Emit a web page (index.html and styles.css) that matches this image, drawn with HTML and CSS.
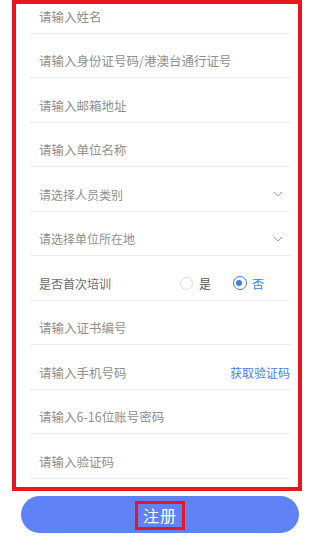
FILE: index.html
```html
<!DOCTYPE html>
<html lang="zh-CN">
<head>
    <meta charset="UTF-8">
    <meta name="viewport" content="width=device-width, initial-scale=1.0">
    <title>注册</title>
    <link rel="stylesheet" href="styles.css">
</head>
<body>
    <div class="form-box">
        <div class="row"><span class="hint">请输入姓名</span></div>
        <div class="row"><span class="hint">请输入身份证号码/港澳台通行证号</span></div>
        <div class="row"><span class="hint">请输入邮箱地址</span></div>
        <div class="row"><span class="hint">请输入单位名称</span></div>
        <div class="row">
            <span class="hint small">请选择人员类别</span>
            <svg class="arrow" width="10" height="6" viewBox="0 0 10 6"><polyline points="1,1 5,5 9,1" fill="none" stroke="#a3a3a3" stroke-width="1"/></svg>
        </div>
        <div class="row">
            <span class="hint small">请选择单位所在地</span>
            <svg class="arrow" width="10" height="6" viewBox="0 0 10 6"><polyline points="1,1 5,5 9,1" fill="none" stroke="#a3a3a3" stroke-width="1"/></svg>
        </div>
        <div class="row">
            <span class="label">是否首次培训</span>
            <div class="radios">
                <span class="radio"></span><span class="radio-text">是</span>
                <span class="radio checked"></span><span class="radio-text on">否</span>
            </div>
        </div>
        <div class="row"><span class="hint">请输入证书编号</span></div>
        <div class="row">
            <span class="hint">请输入手机号码</span>
            <span class="code-btn">获取验证码</span>
        </div>
        <div class="row"><span class="hint">请输入6-16位账号密码</span></div>
        <div class="row"><span class="hint">请输入验证码</span></div>
    </div>
    <button class="submit"><span class="submit-text">注册</span></button>
</body>
</html>
```

FILE: styles.css
```css
body {
    margin: 0;
    background: #fff;
    font-family: "Noto Sans CJK SC", "Noto Sans", sans-serif;
    height: 552px;
    overflow: hidden;
}
.form-box {
    margin: 0 18px 0 12px;
    border: 4px solid #e8161e;
    padding: 0 7px 8.5px 14px;
}
.row {
    height: 44.5px;
    box-sizing: border-box;
    display: flex;
    align-items: flex-end;
    border-bottom: 1px solid #ededed;
    padding-left: 9px;
}
.row:first-child {
    height: 29.5px;
}
.row > * {
    line-height: 33px;
}
.hint {
    font-size: 12.5px;
    color: #8f8f8f;
}
.hint.small {
    font-size: 12px;
}
.label {
    font-size: 12px;
    color: #6b6b6b;
}
.arrow {
    margin-left: auto;
    margin-right: 8px;
    align-self: center;
    margin-top: 11px;
}
.radios {
    margin-left: auto;
    margin-right: 27px;
    display: flex;
    align-items: center;
    height: 33px;
}
.radio {
    width: 13px;
    height: 13px;
    box-sizing: border-box;
    border: 1px solid #dcdcdc;
    border-radius: 50%;
}
.radio.checked {
    width: 14px;
    height: 14px;
    border: 1.5px solid #3b7cf5;
    margin-left: 22px;
    position: relative;
}
.radio.checked::after {
    content: "";
    position: absolute;
    left: 2.5px;
    top: 2.5px;
    width: 6px;
    height: 6px;
    border-radius: 50%;
    background: #3b7cf5;
}
.radio-text {
    font-size: 12px;
    color: #555;
    margin-left: 6px;
}
.radio-text.on {
    color: #3b7cf5;
    margin-left: 5px;
}
.code-btn {
    margin-left: auto;
    margin-right: 1px;
    font-size: 12px;
    color: #4a7ef2;
}
.submit {
    display: flex;
    justify-content: center;
    align-items: center;
    margin: 5px 0 0 21px;
    width: 278px;
    height: 37px;
    border: none;
    border-radius: 19px;
    background: #5f83f7;
    padding: 0;
}
.submit-text {
    border: 3px solid #e8161e;
    padding: 2px 5px;
    font-family: "Noto Sans CJK SC", sans-serif;
    font-size: 16px;
    line-height: 19px;
    color: #fff;
    letter-spacing: 1px;
    margin-top: 2px;
}
```
